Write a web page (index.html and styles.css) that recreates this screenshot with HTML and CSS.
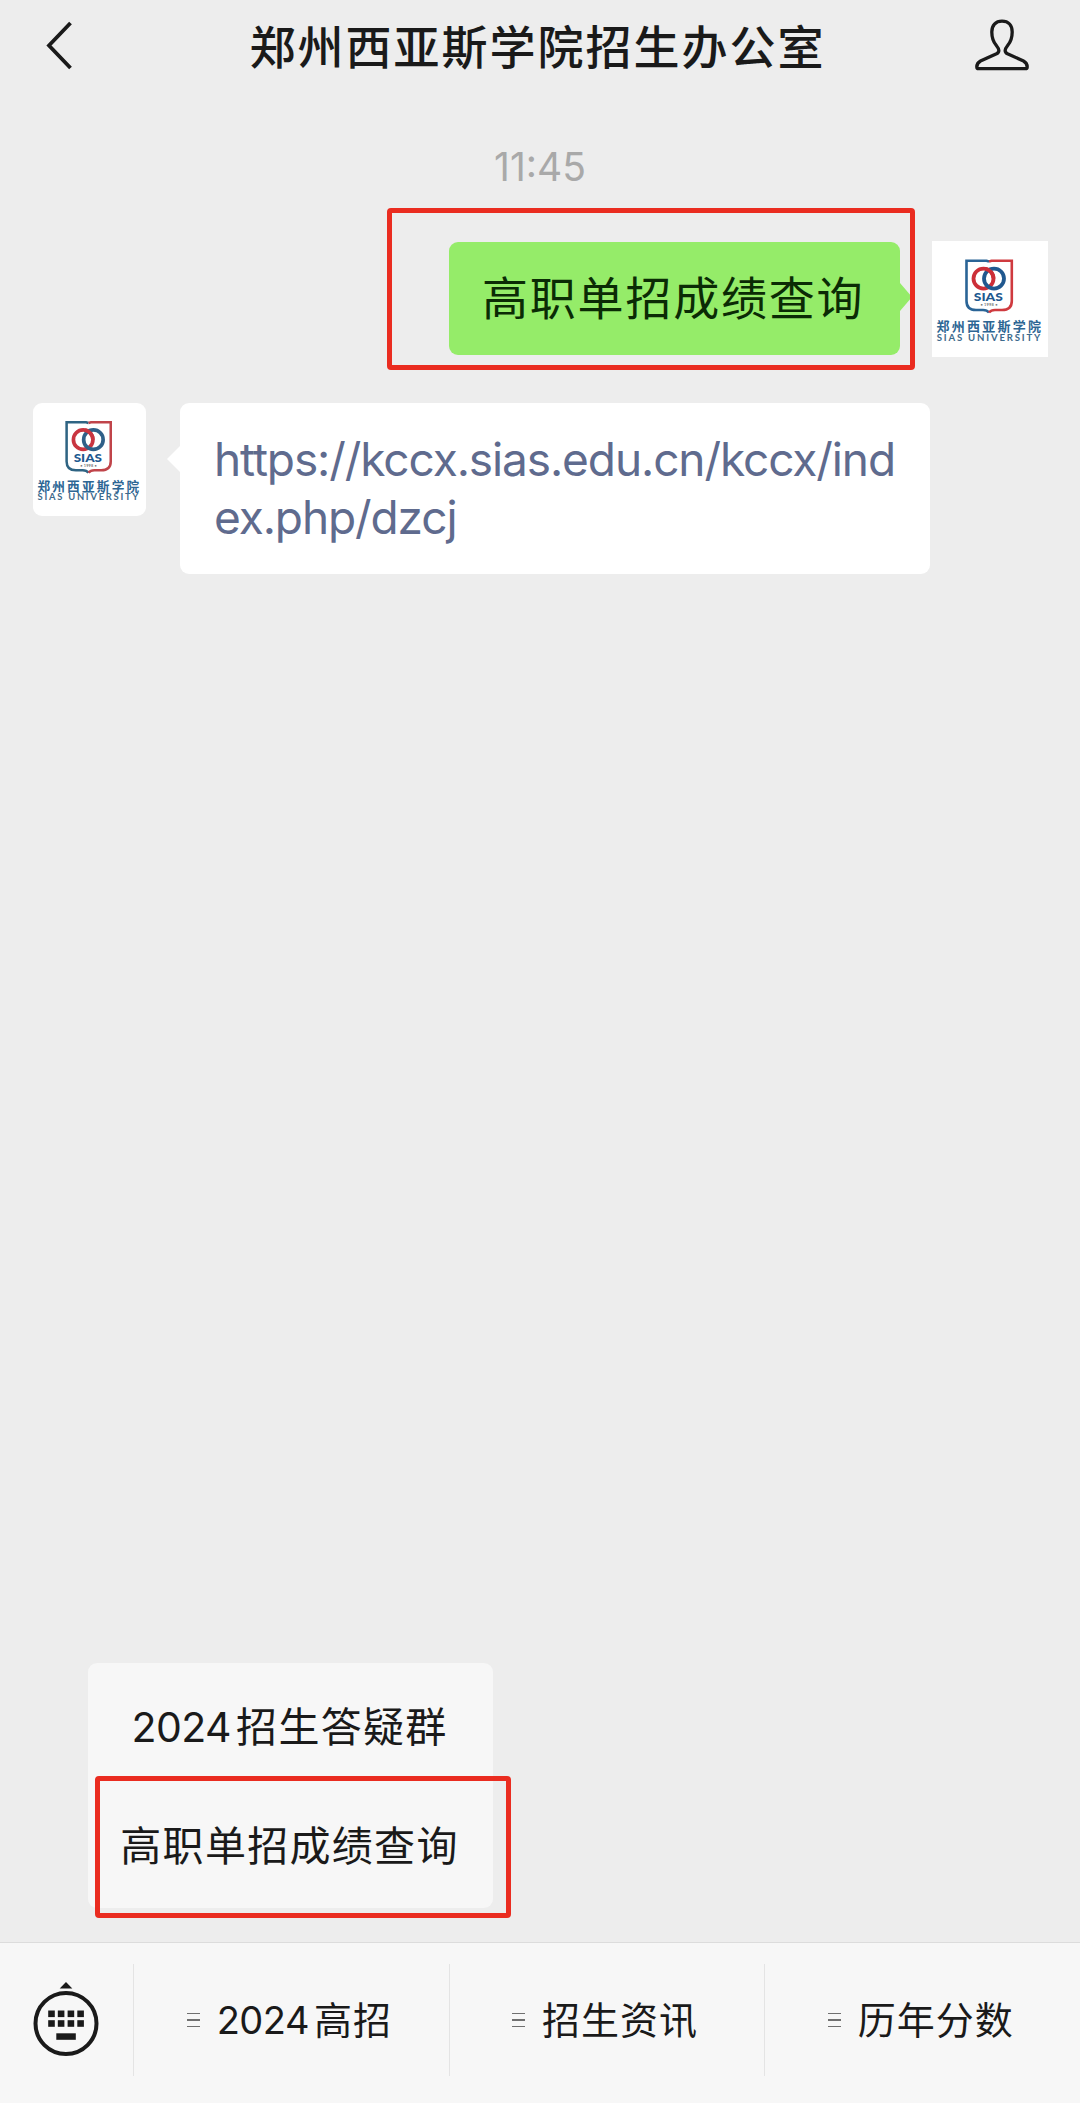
FILE: index.html
```html
<!DOCTYPE html>
<html lang="zh-CN">
<head>
  <meta charset="UTF-8">
  <title>郑州西亚斯学院招生办公室</title>
  <link rel="stylesheet" href="styles.css">
</head>
<body>
  <div class="app">
    <header class="header">
      <svg class="back" viewBox="0 0 28 50" width="28" height="50">
        <path d="M24.5 2 L3 24.5 L24.5 47" fill="none" stroke="#1a1a1a" stroke-width="3.8"/>
      </svg>
      <h1>郑州西亚斯学院招生办公室</h1>
      <svg class="profile" viewBox="0 0 54 53" width="54" height="53">
        <path d="M27 2.2 C20.5 2.2 16.8 6.5 16.8 13 C16.8 19 18.5 23 21.2 26.3 C24.5 30.5 24.8 33 21.5 34.8 L5.5 42 C2.5 43.6 1.8 45.3 1.8 48 Q1.8 49.7 3.5 49.7 H50.5 Q52.2 49.7 52.2 48 C52.2 45.3 51.5 43.6 48.5 42 L32.5 34.8 C29.2 33 29.5 30.5 32.8 26.3 C35.5 23 37.2 19 37.2 13 C37.2 6.5 33.5 2.2 27 2.2 Z" fill="none" stroke="#1a1a1a" stroke-width="3.3"/>
      </svg>
    </header>

    <main class="chat">
      <div class="time">11:45</div>

      <div class="message sent">
        <div class="bubble">高职单招成绩查询</div>
        <svg class="avatar" viewBox="0 0 116 116">
          <path d="M57 20.5 L54.5 19.8 H34.5 V60 Q34.5 69 44 69 H51 Q55 69 57 71.5" fill="none" stroke="#2a6496" stroke-width="2.6"/>
          <path d="M57 20.5 L59.5 19.8 H79.8 V60 Q79.8 69 70 69 H63 Q59 69 57 71.5" fill="none" stroke="#cf3a3f" stroke-width="2.6"/>
          <circle cx="51.5" cy="37.6" r="10" fill="none" stroke="#cc2f38" stroke-width="3.8"/>
          <circle cx="62" cy="37.6" r="10" fill="none" stroke="#20588f" stroke-width="3.8"/>
          <path d="M53.5 27.8 A10 10 0 0 1 61.5 37.6" fill="none" stroke="#cc2f38" stroke-width="3.8"/>
          <text class="logo-name" x="41.8" y="60.3" textLength="29" lengthAdjust="spacingAndGlyphs">SIAS</text>
          <text class="logo-year" x="48.5" y="65.3" textLength="17">• 1998 •</text>
          <text class="logo-cn" x="4.5" y="90.2" textLength="104.5">郑州西亚斯学院</text>
          <text class="logo-en" x="4.7" y="99.8" textLength="103.5">SIAS UNIVERSITY</text>
        </svg>
        <div class="mark mark-message"></div>
      </div>

      <div class="message received">
        <svg class="avatar" viewBox="0 0 116 116">
          <path d="M57 20.5 L54.5 19.8 H34.5 V60 Q34.5 69 44 69 H51 Q55 69 57 71.5" fill="none" stroke="#2f6483" stroke-width="2.6"/>
          <path d="M57 20.5 L59.5 19.8 H79.8 V60 Q79.8 69 70 69 H63 Q59 69 57 71.5" fill="none" stroke="#c0444a" stroke-width="2.6"/>
          <circle cx="51.5" cy="37.6" r="10" fill="none" stroke="#c93540" stroke-width="3.8"/>
          <circle cx="62" cy="37.6" r="10" fill="none" stroke="#2f6088" stroke-width="3.8"/>
          <path d="M53.5 27.8 A10 10 0 0 1 61.5 37.6" fill="none" stroke="#c93540" stroke-width="3.8"/>
          <text class="logo-name" x="41.8" y="60.3" textLength="29" lengthAdjust="spacingAndGlyphs">SIAS</text>
          <text class="logo-year" x="48.5" y="65.3" textLength="17">• 1998 •</text>
          <text class="logo-cn" x="4.5" y="90.2" textLength="104.5">郑州西亚斯学院</text>
          <text class="logo-en" x="4.7" y="99.8" textLength="103.5">SIAS UNIVERSITY</text>
        </svg>
        <div class="bubble">https://kccx.sias.edu.cn/kccx/ind<br>ex.php/dzcj</div>
      </div>

      <div class="submenu">
        <div class="submenu-item"><span class="num">2024</span>招生答疑群</div>
        <div class="submenu-item">高职单招成绩查询</div>
        <div class="mark mark-menu"></div>
      </div>
    </main>

    <footer class="toolbar">
      <div class="keyboard">
        <svg viewBox="0 0 66 76" width="66" height="76">
          <path d="M33 1 L39.3 7.5 H26.7 Z" fill="#1a1a1a"/>
          <circle cx="33" cy="42.5" r="30.5" fill="none" stroke="#1a1a1a" stroke-width="4"/>
          <g fill="#1a1a1a">
            <rect x="15.2" y="29.5" width="6.6" height="6.6"/>
            <rect x="24.8" y="29.5" width="6.6" height="6.6"/>
            <rect x="34.6" y="29.5" width="6.6" height="6.6"/>
            <rect x="44.3" y="29.5" width="6.6" height="6.6"/>
            <rect x="15.2" y="39.2" width="6.6" height="6.6"/>
            <rect x="24.8" y="39.2" width="6.6" height="6.6"/>
            <rect x="34.6" y="39.2" width="6.6" height="6.6"/>
            <rect x="44.3" y="39.2" width="6.6" height="6.6"/>
            <rect x="23.3" y="52.3" width="19.5" height="6.5"/>
          </g>
        </svg>
      </div>
      <div class="tab">
        <span class="lines"><i></i><i></i><i></i></span>
        <span class="label"><span class="num">2024</span>高招</span>
      </div>
      <div class="tab">
        <span class="lines"><i></i><i></i><i></i></span>
        <span class="label">招生资讯</span>
      </div>
      <div class="tab">
        <span class="lines"><i></i><i></i><i></i></span>
        <span class="label">历年分数</span>
      </div>
    </footer>
  </div>
</body>
</html>
```
FILE: styles.css
```css
* {
  box-sizing: border-box;
}

body {
  margin: 0;
  background-color: #ededed;
  color: #1a1a1a;
  font-family: "Noto Sans CJK SC", sans-serif;
}

.app {
  display: flex;
  flex-direction: column;
  height: 2103px;
}

/* header */
.header {
  display: grid;
  grid-template-columns: 1fr auto 1fr;
  align-items: center;
  height: 93px;
  padding: 0 51px 2px 46px;
}

.header h1 {
  margin: 0;
  padding-bottom: 4px;
  font-size: 46px;
  font-weight: 500;
  line-height: 70px;
  letter-spacing: 2px;
}

.profile {
  justify-self: end;
}

/* messages */
.chat {
  flex: 1;
  display: flex;
  flex-direction: column;
}

.time {
  height: 148px;
  padding-top: 50px;
  text-align: center;
  font-family: Inter, sans-serif;
  font-size: 39px;
  line-height: 48px;
  color: #a9a9a9;
}

.message {
  position: relative;
  display: flex;
  align-items: flex-start;
}

.bubble {
  position: relative;
  border-radius: 9px;
}

.bubble::after {
  content: "";
  position: absolute;
  border: solid transparent;
}

.sent {
  justify-content: flex-end;
  gap: 32px;
  height: 161px;
  padding-right: 32px;
}

.sent .avatar {
  width: 116px;
  height: 116px;
  background-color: #fff;
}

.sent .bubble {
  width: 451px;
  height: 113px;
  margin-top: 1px;
  padding-left: 33px;
  background-color: #95ec69;
  color: #0b2b05;
  font-size: 46px;
  line-height: 106px;
  letter-spacing: 1.8px;
  white-space: nowrap;
}

.sent .bubble::after {
  left: 100%;
  top: 41px;
  border-width: 14px 0 14px 12px;
  border-left-color: #95ec69;
}

.received {
  gap: 34px;
  padding-left: 33px;
}

.received .avatar {
  width: 113px;
  height: 113px;
  margin-top: 1px;
  border-radius: 9px;
  background-color: #fff;
}

.received .bubble {
  width: 750px;
  height: 171px;
  margin-top: 1px;
  padding: 27px 0 0 34px;
  background-color: #fff;
  color: #5f6b8e;
  font-family: Inter, sans-serif;
  font-size: 46px;
  line-height: 58px;
  letter-spacing: -1.1px;
  white-space: nowrap;
}

.received .bubble::after {
  right: 100%;
  top: 43px;
  border-width: 13px 13px 13px 0;
  border-right-color: #fff;
}

/* logo lettering */
.logo-name {
  font: 900 11.5px Lato, sans-serif;
  fill: #20588f;
}

.logo-year {
  font: 700 4px Lato, sans-serif;
  fill: #777;
}

.logo-cn {
  font: 700 13px "Noto Sans CJK SC", sans-serif;
  fill: #2d6694;
}

.logo-en {
  font: 700 9.6px Lato, sans-serif;
  fill: #3d6a8c;
}

/* popup menu */
.submenu {
  position: relative;
  width: 405px;
  height: 245px;
  margin: auto 0 34px 88px;
  padding: 2px 2px 0 0;
  border-radius: 9px;
  background-color: #f7f7f7;
  text-align: center;
}

.submenu-item {
  height: 119px;
  font-size: 41px;
  line-height: 118px;
  letter-spacing: 1.3px;
  white-space: nowrap;
}

.num {
  margin-right: 5px;
  font-family: Inter, sans-serif;
  letter-spacing: -0.5px;
}

/* red highlight frames */
.mark {
  position: absolute;
  border: 5px solid #ea2c20;
  border-radius: 4px;
}

.mark-message {
  left: 387px;
  top: -33px;
  width: 528px;
  height: 162px;
}

.mark-menu {
  left: 7px;
  top: 113px;
  width: 416px;
  height: 142px;
}

/* bottom bar */
.toolbar {
  display: flex;
  height: 161px;
  padding-top: 21px;
  border-top: 1px solid #dcdcdc;
  background-color: #f7f7f7;
}

.keyboard {
  width: 133px;
  height: 112px;
  padding: 17px 0 0 33px;
}

.tab {
  flex: 1;
  display: flex;
  justify-content: center;
  align-items: center;
  gap: 17px;
  height: 112px;
  padding-right: 4px;
  border-left: 1px solid #e4e4e4;
  font-size: 38px;
  letter-spacing: 1px;
  white-space: nowrap;
}

.label {
  padding-bottom: 5px;
}

.lines {
  display: flex;
  flex-direction: column;
  gap: 5px;
}

.lines i {
  width: 13px;
  height: 1.5px;
  background-color: #707070;
}
```
